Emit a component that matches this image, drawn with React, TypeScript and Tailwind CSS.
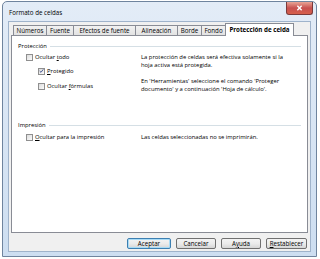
import type { ReactNode } from "react";

const tabs = [
  { label: "Números", w: "w-[33px]" },
  { label: "Fuente", w: "w-[27px]" },
  { label: "Efectos de fuente", w: "w-[62px]" },
  { label: "Alineación", w: "w-[42px]" },
  { label: "Borde", w: "w-[24px]" },
  { label: "Fondo", w: "w-[24px]" },
];

function Check({ checked = false, children }: { checked?: boolean; children: ReactNode }) {
  return (
    <div className="flex h-[8px] items-center gap-[2px]">
      <span className="flex h-[7px] w-[7px] items-center justify-center border border-[#8f8f8f] bg-gradient-to-br from-[#dcdcdc] to-[#fbfbfb]">
        {checked && (
          <svg viewBox="0 0 7 7" className="h-[6px] w-[6px]">
            <path d="M1 3.6 L2.8 5.4 L6 1.2" fill="none" stroke="#3b4f8c" strokeWidth="1.3" />
          </svg>
        )}
      </span>
      <span>{children}</span>
    </div>
  );
}

function Legend({ children }: { children: ReactNode }) {
  return (
    <div className="flex h-[8px] items-center gap-[3px] pr-[6px]">
      <span>{children}</span>
      <span className="h-px flex-1 bg-[#d5dfe5]" />
    </div>
  );
}

function Btn({ children, primary = false, w = "w-[40px]" }: { children: ReactNode; primary?: boolean; w?: string }) {
  return (
    <div
      className={`flex h-[11px] ${w} items-center justify-center rounded-[2px] border bg-gradient-to-b from-[#f3f3f3] via-[#ebebeb] to-[#d6d6d6] ${
        primary ? "border-[#3c7fb1] shadow-[inset_0_0_0_1px_#a8dbf6]" : "border-[#707070]"
      }`}
    >
      {children}
    </div>
  );
}

export default function App() {
  return (
    <div className="h-[259px] w-[320px] overflow-hidden bg-white pl-[2px] pt-[1px] font-['Open_Sans','Noto_Sans',sans-serif] text-[6.2px] leading-[8px] text-black">
      <div className="flex h-[256px] w-[315px] flex-col rounded-t-[5px] border border-[#6f849e] bg-gradient-to-b from-[#e3ecf7] to-[#cddef1] px-[5px] pb-[4px]">
        {/* title bar */}
        <div className="flex h-[19px] items-start justify-between">
          <span className="pl-[1px] pt-[7px]">Formato de celdas</span>
          <div className="mr-[-2px] flex h-[13px] w-[27px] items-center justify-center rounded-b-[3px] border border-t-0 border-[#7b3a3a] bg-gradient-to-b from-[#e8a597] via-[#c75050] to-[#d7604c]">
            <svg viewBox="0 0 8 7" className="h-[6px] w-[7px]">
              <path d="M1.5 1 L6.5 6 M6.5 1 L1.5 6" stroke="white" strokeWidth="1.6" />
            </svg>
          </div>
        </div>

        {/* client area */}
        <div className="flex flex-1 flex-col border border-[#9fb3cb] bg-[#f0f0f0] pl-[2px] pr-[2px]">
          <div className="flex h-[13px] items-end pl-[2px]">
            {tabs.map((t) => (
              <div
                key={t.label}
                className={`flex h-[10px] ${t.w} items-center justify-center border-l border-t border-[#898c95] bg-gradient-to-b from-[#f2f2f2] to-[#e2e2e2]`}
              >
                {t.label}
              </div>
            ))}
            <div className="relative z-10 mb-[-1px] flex h-[13px] w-[69px] items-center justify-center border-l border-r border-t border-[#898c95] bg-white pb-[1px] font-bold">
              Protección de celda
            </div>
          </div>

          <div className="flex h-[198px] flex-col border border-[#898c95] bg-white pl-[6px] pt-[6px] text-[5.85px]">
            <Legend>Protección</Legend>
            <div className="mt-[3px] flex">
              <div className="flex w-[123px] flex-col pl-[8px]">
                <Check>
                  Ocultar <span className="underline">t</span>odo
                </Check>
                <div className="mt-[6px] flex flex-col gap-[7px] pl-[12px]">
                  <Check checked>
                    <span className="underline">P</span>rotegido
                  </Check>
                  <Check>
                    Ocultar <span className="underline">f</span>órmulas
                  </Check>
                </div>
              </div>
              <div className="flex flex-col gap-[8px]">
                <p>
                  La protección de celdas será efectiva solamente si la
                  <br />
                  hoja activa está protegida.
                </p>
                <p>
                  En 'Herramientas' seleccione el comando 'Proteger
                  <br />
                  documento' y a continuación 'Hoja de cálculo'.
                </p>
              </div>
            </div>

            <div className="mt-[28px]">
              <Legend>Impresión</Legend>
            </div>
            <div className="mt-[4px] flex">
              <div className="w-[123px] pl-[8px]">
                <Check>
                  <span className="underline">O</span>cultar para la impresión
                </Check>
              </div>
              <p>Las celdas seleccionadas no se imprimirán.</p>
            </div>
          </div>

          <div className="mt-[5px] flex justify-end gap-[5px] pr-[1px]">
            <Btn primary w="w-[44px]">Aceptar</Btn>
            <Btn>Cancelar</Btn>
            <Btn>
              A<span className="underline">y</span>uda
            </Btn>
            <Btn w="w-[41px]">
              <span className="underline">R</span>establecer
            </Btn>
          </div>
        </div>
      </div>
    </div>
  );
}
